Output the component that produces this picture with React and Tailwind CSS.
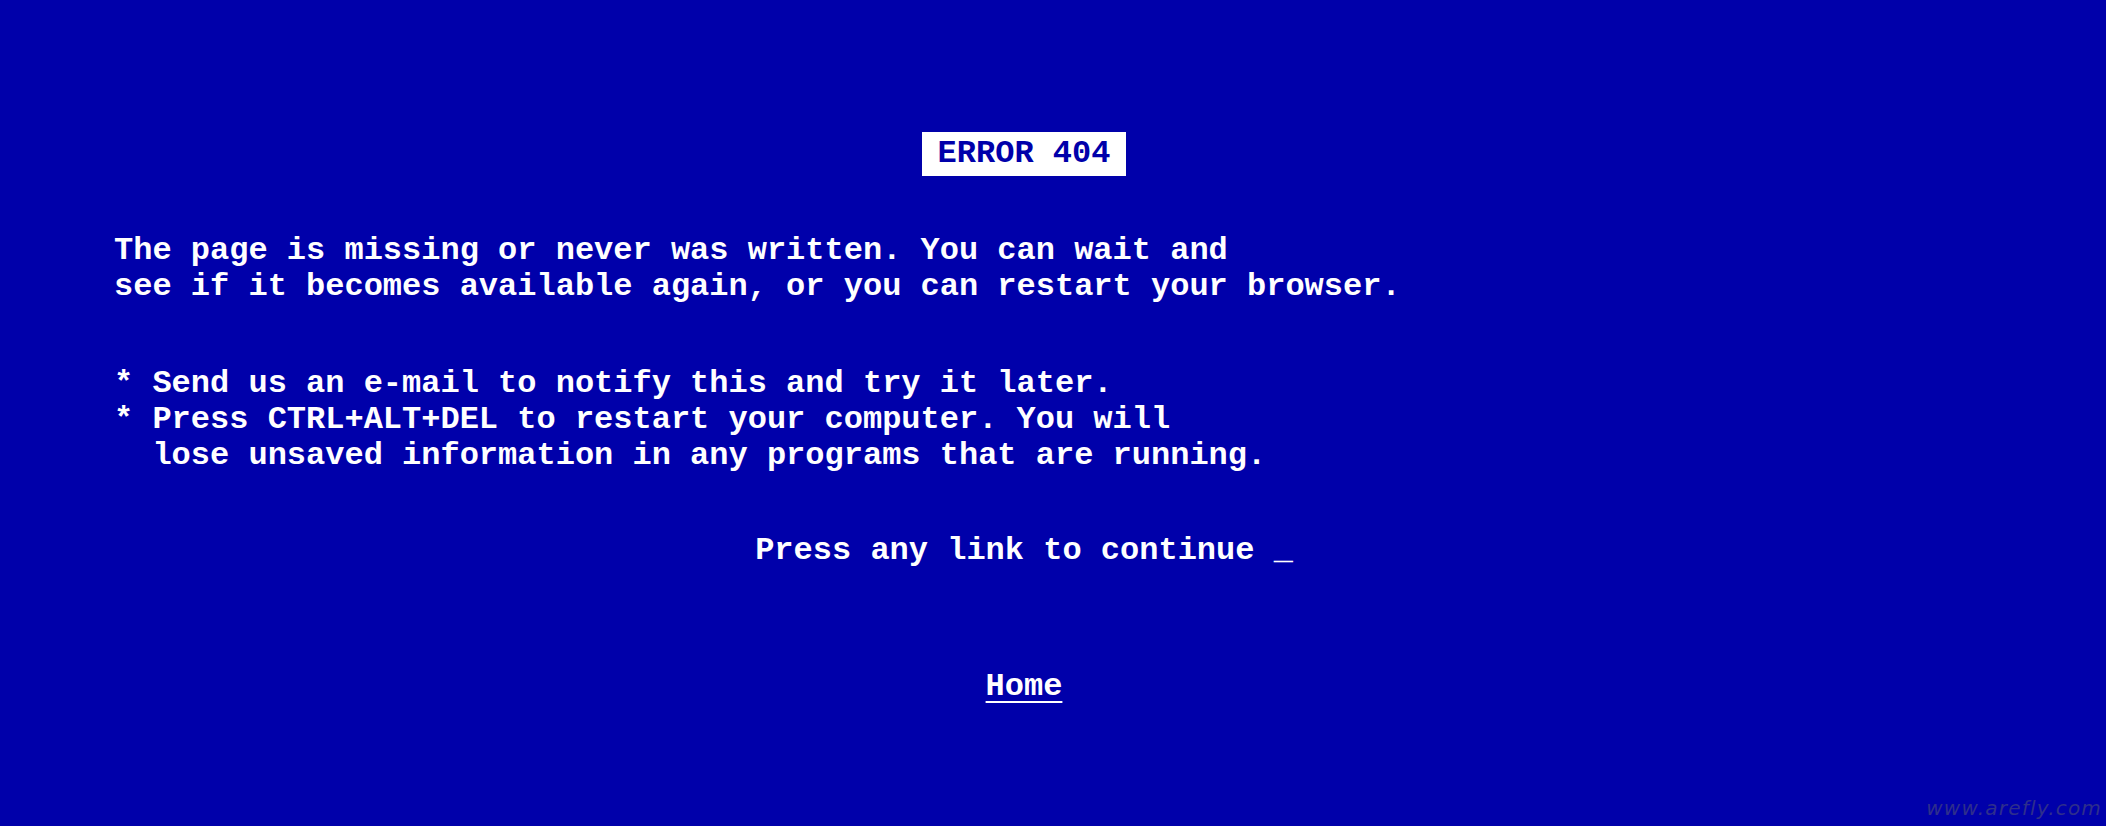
export default function App() {
  return (
    <div className="relative h-[826px] w-full overflow-hidden bg-[#0000aa] text-white font-['Liberation_Mono',_'Courier_New',_monospace] font-bold text-[32px] leading-[36px]">
      <div className="w-[2048px] pt-[132px]">
        {/* Title */}
        <div className="text-center">
          <span className="inline-block bg-white px-4 py-1 text-[#0000aa]">ERROR 404</span>
        </div>

        {/* Message */}
        <p className="mt-[57px] pl-[114px]">
          The page is missing or never was written. You can wait and
          <br />
          see if it becomes available again, or you can restart your browser.
        </p>

        {/* Options */}
        <ul className="mt-[61px] pl-[114px]">
          <li className="flex">
            <span className="w-[2ch] shrink-0">*</span>
            <span>Send us an e-mail to notify this and try it later.</span>
          </li>
          <li className="flex">
            <span className="w-[2ch] shrink-0">*</span>
            <span>
              Press CTRL+ALT+DEL to restart your computer. You will
              <br />
              lose unsaved information in any programs that are running.
            </span>
          </li>
        </ul>

        <p className="mt-[59px] text-center whitespace-pre">Press any link to continue _</p>

        <div className="mt-[100px] text-center">
          <a href="#" className="underline underline-offset-[6px] decoration-2">Home</a>
        </div>
      </div>

      {/* watermark */}
      <div className="absolute right-[4px] bottom-[8px] font-['DejaVu_Sans',_sans-serif] italic font-normal text-[20px] tracking-[1.2px] leading-none text-[#2e2e8c]">
        www.arefly.com
      </div>
    </div>
  );
}
